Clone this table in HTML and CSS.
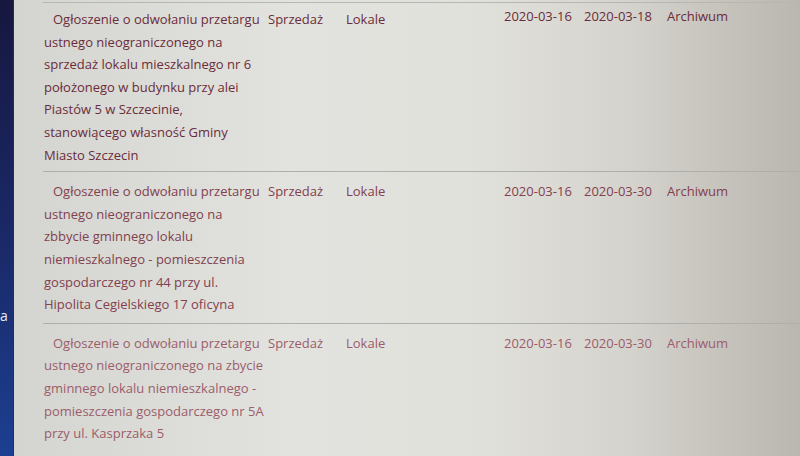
FILE: index.html
```html
<!DOCTYPE html>
<html lang="pl">
<head>
<meta charset="utf-8">
<title>Przetargi</title>
<link rel="stylesheet" href="styles.css">
</head>
<body>
<div class="page">
  <aside class="side"><span class="side-letter">a</span></aside>
  <main class="main">
    <div class="table">
      <div class="row row-1">
        <div class="cell title">Ogłoszenie o odwołaniu przetargu<br>ustnego nieograniczonego na<br>sprzedaż lokalu mieszkalnego nr 6<br>położonego w budynku przy alei<br>Piastów 5 w Szczecinie,<br>stanowiącego własność Gminy<br>Miasto Szczecin</div>
        <div class="cell type">Sprzedaż</div>
        <div class="cell cat">Lokale</div>
        <div class="cell date up">2020-03-16</div>
        <div class="cell date up">2020-03-18</div>
        <div class="cell status up">Archiwum</div>
      </div>
      <div class="row row-2">
        <div class="cell title">Ogłoszenie o odwołaniu przetargu<br>ustnego nieograniczonego na<br>zbbycie gminnego lokalu<br>niemieszkalnego - pomieszczenia<br>gospodarczego nr 44 przy ul.<br>Hipolita Cegielskiego 17 oficyna</div>
        <div class="cell type">Sprzedaż</div>
        <div class="cell cat">Lokale</div>
        <div class="cell date">2020-03-16</div>
        <div class="cell date">2020-03-30</div>
        <div class="cell status">Archiwum</div>
      </div>
      <div class="row row-3">
        <div class="cell title">Ogłoszenie o odwołaniu przetargu<br>ustnego nieograniczonego na zbycie<br>gminnego lokalu niemieszkalnego -<br>pomieszczenia gospodarczego nr 5A<br>przy ul. Kasprzaka 5</div>
        <div class="cell type">Sprzedaż</div>
        <div class="cell cat">Lokale</div>
        <div class="cell date">2020-03-16</div>
        <div class="cell date">2020-03-30</div>
        <div class="cell status">Archiwum</div>
      </div>
    </div>
  </main>
</div>
</body>
</html>
```

FILE: styles.css
```css
html, body {
  margin: 0;
  padding: 0;
  height: 100%;
  overflow: hidden;
}

body {
  font-family: "Open Sans", "DejaVu Sans", sans-serif;
  font-size: 13px;
}

.page {
  display: flex;
  height: 456px;
}

.side {
  width: 14px;
  flex: 0 0 14px;
  background: linear-gradient(180deg, #17173f 0%, #1a2a6a 55%, #1c3f91 100%);
  border-right: 1px solid #2a2f3c;
  display: flex;
  flex-direction: column;
  justify-content: flex-start;
  padding-top: 306px;
  box-sizing: border-box;
  overflow: hidden;
}

.side-letter {
  color: #e8ecf6;
  font-size: 14px;
  line-height: 20px;
  margin-left: 0;
}

.main {
  flex: 1;
  background: linear-gradient(90deg, #d4d5d0 0%, #e2e3de 35%, #e1e1dc 58%, #d5d3cd 78%, #bab6b0 100%);
  padding: 2px 0 0 29px;
  box-sizing: border-box;
}

.table {
  border-top: 1px solid #b6b7b2;
}

.row {
  display: grid;
  grid-template-columns: 225px 78px 158px 80px 83px 1fr;
  padding: 6px 0 7px;
  border-bottom: 1px solid #aeafaa;
  line-height: 22.6px;
}

.row-1 { color: #6b2c3a; padding-top: 5px; padding-bottom: 5px; }
.row-2 { color: #83404f; padding-top: 8px; }
.row-3 { color: #9c5c6b; border-bottom: none; padding-top: 8px; }

.cell {
  white-space: nowrap;
}

.title {
  padding-left: 1px;
  text-indent: 9px;
}

.up {
  margin-top: -3px;
}
```
